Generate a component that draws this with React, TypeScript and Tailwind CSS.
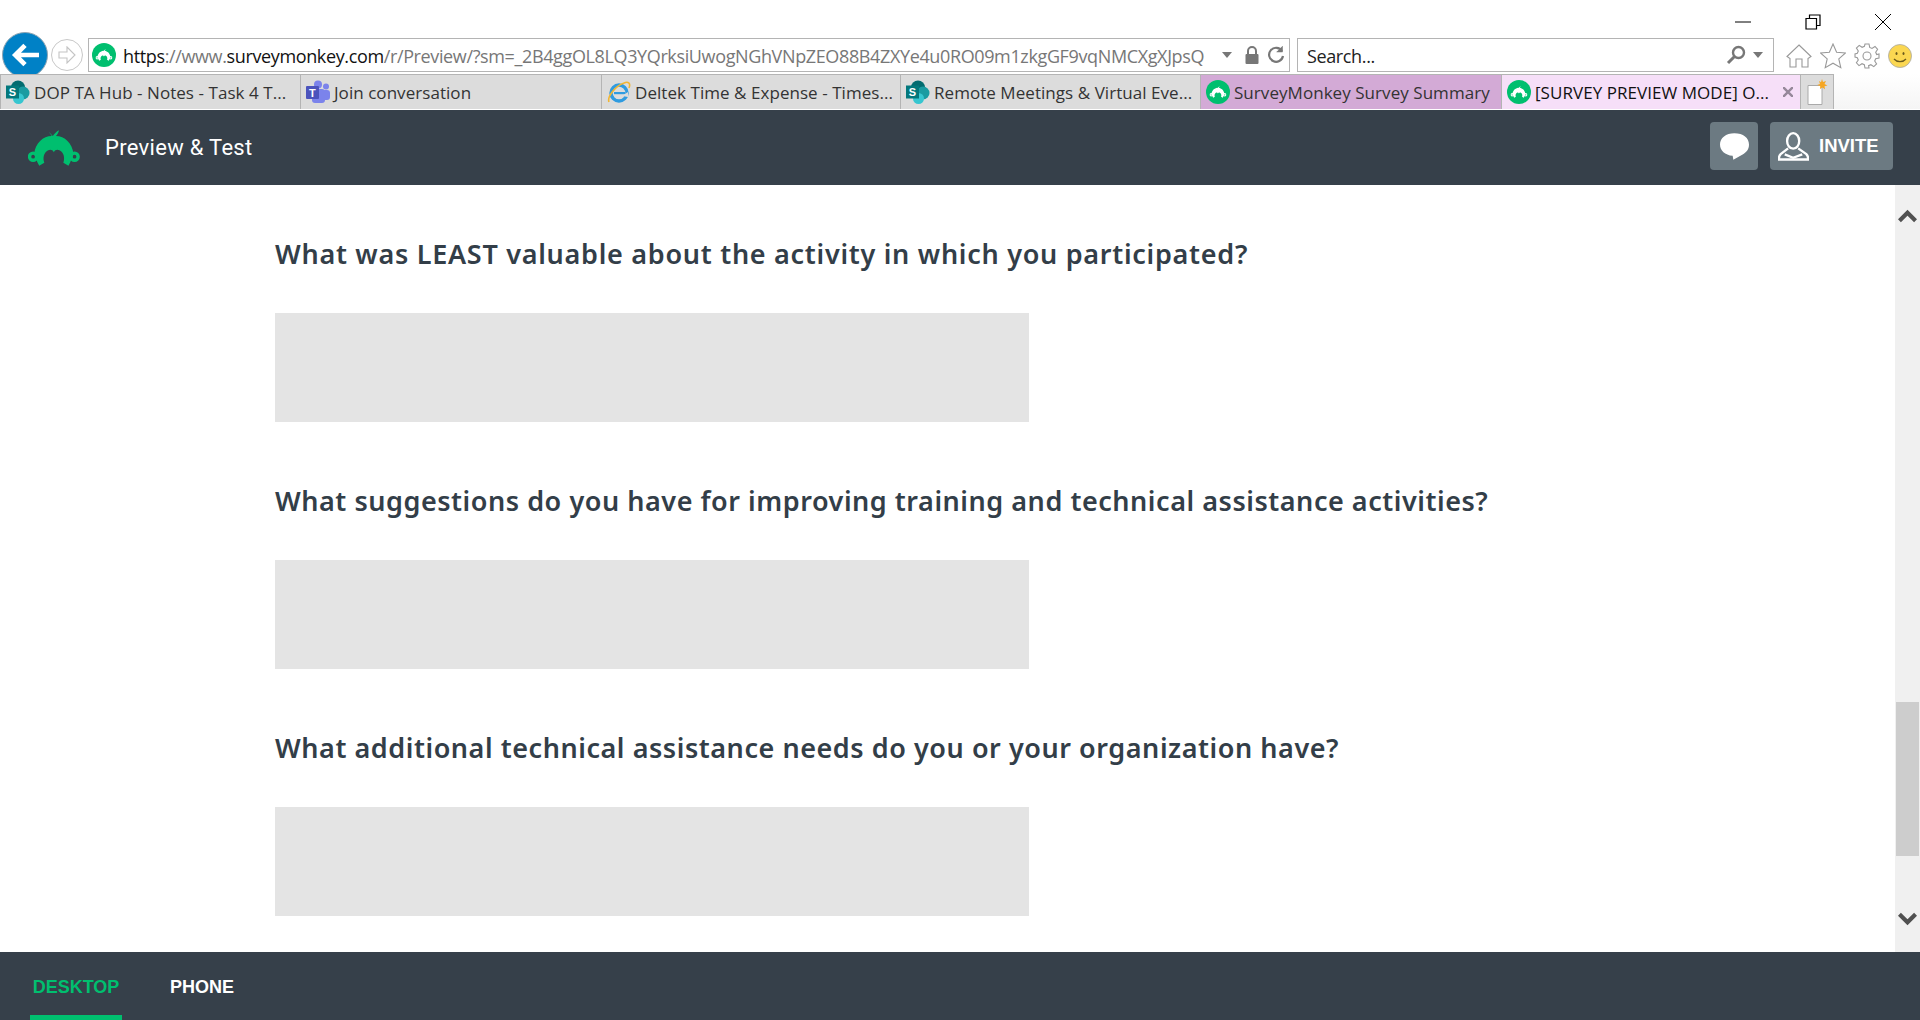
import React from 'react';

const UI = { fontFamily: '"Open Sans", "Noto Sans", sans-serif' };

const MonkeyShape = ({ fill }: { fill: string }) => (
  <g>
    <path fill={fill} d="M61 5 L73 17 C78 10 84 3 91 0 C90 7 86 13 82 17 C108 17 130 38 134 70 L124 95 L119 105 L104 96 C109 84 106 66 94 60 C86 56 80 58 76 65 C72 58 66 56 58 60 C46 66 43 84 48 96 L33 105 L28 95 L18 70 C22 38 44 17 70 17 Z" />
    <circle cx="15" cy="78" r="10.500" fill="none" stroke={fill} strokeWidth="10" />
    <circle cx="137" cy="78" r="10.500" fill="none" stroke={fill} strokeWidth="10" />
  </g>
);

const MonkeyFavicon = ({ className }: { className: string }) => (
  <svg viewBox="0 0 24 24" className={className}>
    <circle cx="12" cy="12" r="12" fill="#00bf6f" />
    <svg x="3.500" y="6" width="17" height="12" viewBox="0 0 153 105">
      <MonkeyShape fill="#fff" />
    </svg>
  </svg>
);

const SharePointIcon = () => (
  <svg viewBox="0 0 24 24" className="w-6 h-6 shrink-0">
    <circle cx="12" cy="7.500" r="7" fill="#036c70" />
    <circle cx="17" cy="13" r="6.500" fill="#1a9ba1" />
    <circle cx="12.500" cy="18.500" r="5.500" fill="#37c6d0" />
    <rect x="0" y="5.500" width="13" height="13" fill="#03787c" />
    <text x="6.500" y="16" fontSize="11" fontWeight="700" fill="#fff" textAnchor="middle" fontFamily="Liberation Sans">S</text>
  </svg>
);

const TeamsIcon = () => (
  <svg viewBox="0 0 24 24" className="w-6 h-6 shrink-0">
    <circle cx="20" cy="6.500" r="3" fill="#7b83eb" />
    <rect x="16" y="10" width="8" height="10" rx="3" fill="#7b83eb" />
    <circle cx="12" cy="4.500" r="4" fill="#7b83eb" />
    <rect x="6" y="9" width="13" height="14" rx="3" fill="#7b83eb" />
    <rect x="0" y="6" width="13" height="13" rx="1" fill="#4b53bc" />
    <text x="6.500" y="16.500" fontSize="11" fontWeight="700" fill="#fff" textAnchor="middle" fontFamily="Liberation Sans">T</text>
  </svg>
);

const IEIcon = () => (
  <svg viewBox="0 0 24 24" className="w-6 h-6 shrink-0">
    <circle cx="12" cy="13" r="8" fill="none" stroke="#2f9be0" strokeWidth="3.400" />
    <rect x="7" y="12" width="11" height="2.200" fill="#2f9be0" />
    <path d="M21 12 L15 16 L21 17 Z" fill="#dcdcdc" />
    <path d="M2 22 C0 17 8 6 17 3 C21 1 24 3 22 8" fill="none" stroke="#f2b632" strokeWidth="1.600" />
  </svg>
);

const Tab = ({
  icon,
  label,
  width,
  bg = 'bg-[#dcdcdc]',
  text = 'text-[#333]',
  close = false,
}: {
  icon: React.ReactNode;
  label: string;
  width: string;
  bg?: string;
  text?: string;
  close?: boolean;
}) => (
  <div className={`${width} ${bg} ${text} h-full flex items-center gap-[4px] pl-[5px] border-l border-t border-[#b4b4b4] whitespace-nowrap overflow-hidden text-[17px] tracking-[0.05px]`}>
    {icon}
    <span className="flex-1 pt-[2px]">{label}</span>
    {close && (
      <svg viewBox="0 0 10 10" className="w-[10px] h-[10px] mr-[7px]" stroke="#96889a" strokeWidth="2.400"><path d="M0 0L10 10M10 0L0 10" /></svg>
    )}
  </div>
);

const Question = ({ title, tracking }: { title: string; tracking: string }) => (
  <section className="h-[247px] pt-[50px]">
    <h2 className={`${tracking} h-[36px] leading-[38px] text-[27px] font-semibold text-[#333e48] whitespace-nowrap`} style={{ fontFamily: '"Noto Sans", sans-serif' }}>
      {title}
    </h2>
    <div className="mt-[42px] w-[754px] h-[109px] bg-[#e4e4e4]" />
  </section>
);

export default function App() {
  return (
    <div className="h-[1020px] w-[1920px] overflow-hidden flex flex-col bg-white" style={UI}>
      {/* Window controls */}
      <div className="h-[38px] shrink-0 flex items-center justify-end pt-[5px]">
        <svg viewBox="0 0 16 16" className="w-4 h-4 mr-[54px]"><path d="M0 8h16" stroke="#000" strokeWidth="1" /></svg>
        <svg viewBox="0 0 16 16" className="w-4 h-4 mr-[54px]" fill="none" stroke="#000" strokeWidth="1.200"><path d="M1 4.500h10.500V15H1z M4.500 4V1H15v10.500h-3.200" /></svg>
        <svg viewBox="0 0 16 16" className="w-4 h-4 mr-[29px]" stroke="#000" strokeWidth="1"><path d="M0 0L16 16M16 0L0 16" /></svg>
      </div>

      {/* Address row */}
      <div className="h-[36px] shrink-0 flex items-start">
        <div className="relative ml-[2px] -mt-[6px] w-[46px] h-[46px] rounded-full bg-[#0081c6] border border-[#8fa5b3] shrink-0 flex items-center justify-center">
          <svg viewBox="0 0 26 24" className="w-[28px] h-[26px]" fill="none" stroke="#fff" strokeWidth="4.400"><path d="M13 3L4 12l9 9M5 12h21" /></svg>
        </div>
        <div className="ml-[3px] mt-[1px] w-[32px] h-[32px] rounded-full border border-[#c8c8c8] shrink-0 flex items-center justify-center">
          <svg viewBox="0 0 20 18" className="w-[20px] h-[18px]" fill="none" stroke="#c4c4c4" strokeWidth="1.100"><path d="M10 1l8 8-8 8v-5H2V6h8z" /></svg>
        </div>
        <div className="ml-[5px] w-[1202px] h-[34px] border border-[#b4b4b4] flex items-center shrink-0 relative">
          <MonkeyFavicon className="w-[24px] h-[24px] ml-[3px] shrink-0" />
          <span className="ml-[7px] pt-[2px] text-[18px] tracking-[-0.37px] text-[#777] whitespace-nowrap">
            <span className="text-[#111]">https</span>://www.<span className="text-[#111]">surveymonkey.com</span>/r/Preview/?sm=_2B4ggOL8LQ3YQrksiUwogNGhVNpZEO88B4ZXYe4u0RO09m1zkgGF9vqNMCXgXJpsQ
          </span>
          <div className="ml-auto flex items-center">
            <svg viewBox="0 0 10 6" className="w-[10px] h-[6px] mr-[13px]"><path d="M0 0h10L5 6z" fill="#777" /></svg>
            <svg viewBox="0 0 14 18" className="w-[14px] h-[18px] mr-[8px]"><path d="M3 8V5a4 4 0 018 0v3" fill="none" stroke="#777" strokeWidth="2" /><rect x="0.500" y="8" width="13" height="10" rx="1" fill="#777" /></svg>
            <svg viewBox="0 0 18 18" className="w-[18px] h-[18px] mr-[4px]" fill="none" stroke="#777" strokeWidth="2.200"><path d="M15 5A7 7 0 1016 10" /><path d="M15.500 0v6h-6" fill="#777" strokeWidth="0.500" /></svg>
          </div>
        </div>
        <div className="ml-[7px] w-[477px] h-[34px] border border-[#b4b4b4] flex items-center shrink-0">
          <span className="ml-[9px] pt-[2px] text-[18px] tracking-[-0.37px] text-[#222]">Search...</span>
          <div className="ml-auto flex items-center">
            <svg viewBox="0 0 20 20" className="w-[20px] h-[20px] mr-[7px]" fill="none" stroke="#777" strokeWidth="2.400"><circle cx="12.500" cy="7.500" r="5.500" /><path d="M8.500 11.500L2 18" strokeWidth="3" /></svg>
            <svg viewBox="0 0 10 6" className="w-[10px] h-[6px] mr-[10px]"><path d="M0 0h10L5 6z" fill="#777" /></svg>
          </div>
        </div>
        <div className="ml-[12px] mt-[1px] flex items-center h-[34px] gap-[8px]">
          <svg viewBox="0 0 26 24" className="w-[26px] h-[24px]" fill="none" stroke="#999" strokeWidth="1.100"><path d="M13 1L25 12.500 22 14.500V23H16V15H10V23H4V14.500L1 12.500Z" /></svg>
          <svg viewBox="0 0 26 26" className="w-[26px] h-[26px]" fill="none" stroke="#999" strokeWidth="1.100"><path d="M13 1l3.600 8.200 8.900.8-6.700 5.900 2 8.800L13 20.200l-7.800 4.500 2-8.800L.5 10l8.900-.8z" /></svg>
          <svg viewBox="0 0 26 26" className="w-[26px] h-[26px]" fill="none" stroke="#999" strokeWidth="1.100"><circle cx="13" cy="13" r="4" /><path d="M11 1h4l.7 3.400 2.300 1 3-1.900 2.600 2.800-1.900 2.900 1 2.300L25 11v4l-3.300.7-1 2.300 1.900 3-2.800 2.600-2.900-1.900-2.300 1L15 25h-4l-.7-3.300-2.300-1-3 1.900-2.600-2.800L4.300 17l-1-2.300L1 14v-3l2.300-.7 1-2.300-1.900-3L5.200 2.400l2.900 1.900 2.300-1z" /></svg>
          <svg viewBox="0 0 24 24" className="w-[24px] h-[24px]"><circle cx="12" cy="12" r="11.500" fill="#fbd751" stroke="#a8a8a8" strokeWidth="0.800" /><ellipse cx="8.500" cy="9.500" rx="1" ry="1.600" fill="#6b5a1c" /><ellipse cx="15.500" cy="9.500" rx="1" ry="1.600" fill="#6b5a1c" /><path d="M6 15c3 3.500 9 3.500 12 0" fill="none" stroke="#6b5a1c" strokeWidth="1.200" /></svg>
        </div>
      </div>

      {/* Tab strip */}
      <div className="relative h-[35px] shrink-0 flex">
        <Tab width="w-[300px]" icon={<SharePointIcon />} label="DOP TA Hub - Notes - Task 4 T..." />
        <Tab width="w-[301px]" icon={<TeamsIcon />} label="Join conversation" />
        <Tab width="w-[299px]" icon={<IEIcon />} label="Deltek Time & Expense - Times..." />
        <Tab width="w-[300px]" icon={<SharePointIcon />} label="Remote Meetings & Virtual Eve..." />
        <Tab width="w-[301px]" bg="bg-[#d3aad6]" icon={<MonkeyFavicon className="w-6 h-6 shrink-0" />} label="SurveyMonkey Survey Summary" />
        <Tab width="w-[299px]" bg="bg-[#f6dff8]" text="text-[#111]" close icon={<MonkeyFavicon className="w-6 h-6 shrink-0" />} label="[SURVEY PREVIEW MODE] O..." />
        <div className="w-[34px] h-full bg-[#dcdcdc] border border-b-0 border-[#b4b4b4] flex items-center justify-center">
          <svg viewBox="0 0 22 26" className="w-[22px] h-[26px]">
            <path d="M2 6.500h14v19H2z" fill="#fff" stroke="#aaa" />
            <path d="M16 0l1 3 3-1-1.500 3 3 1.500-3 .8.500 3-2.700-1.800L14 10l.2-3-3-1 2.800-1-1-3 2 1.300z" fill="#f5a623" />
          </svg>
        </div>
        <div className="flex-1 bg-gradient-to-b from-white to-[#f5f5f5]" />
      </div>

      {/* App header */}
      <header className="mt-px h-[75px] shrink-0 bg-[#36404a] flex items-center pl-[28px] pr-[27px]">
        <svg viewBox="0 0 153 105" className="w-[52px] h-[36px] shrink-0"><MonkeyShape fill="#00bf6f" /></svg>
        <h1 className="ml-[25px] text-[22px] text-white tracking-[0.3px]" style={{ fontFamily: 'Roboto, sans-serif' }}>Preview &amp; Test</h1>
        <div className="ml-auto self-start mt-[12px] flex items-center gap-[12px]">
          <button className="w-[48px] h-[48px] rounded-[4px] bg-[#6c7a82] flex items-center justify-center">
            <svg viewBox="0 0 87 80" className="w-[29px] h-[27px]"><path d="M43 0C70 0 87 14 87 34C87 50 78 58 68 64L40 80L38 68C15 66 0 52 0 34C0 14 18 0 43 0Z" fill="#fff" /></svg>
          </button>
          <button className="w-[123px] h-[48px] rounded-[4px] bg-[#6c7a82] flex items-center pl-[8px]">
            <svg viewBox="0 0 92 85" className="w-[31px] h-[29px]" fill="none" stroke="#fff" strokeWidth="7"><ellipse cx="45" cy="26" rx="18" ry="23" /><path d="M30 48L8 65Q3 70 3 76V81H89V76Q89 70 84 65L60 48" /><path d="M20 66L45 76L72 66" /></svg>
            <span className="ml-[10px] text-[18.5px] font-bold text-white" style={{ fontFamily: '"Liberation Sans", sans-serif' }}>INVITE</span>
          </button>
        </div>
      </header>

      {/* Survey content */}
      <div className="flex-1 min-h-0 flex">
        <main className="flex-1 pl-[275px]">
          <Question tracking="tracking-[0.72px]" title="What was LEAST valuable about the activity in which you participated?" />
          <Question tracking="tracking-[0.54px]" title="What suggestions do you have for improving training and technical assistance activities?" />
          <Question tracking="tracking-[0.55px]" title="What additional technical assistance needs do you or your organization have?" />
        </main>
        <div className="relative w-[25px] shrink-0 bg-[#f0f0f0]">
          <svg viewBox="0 0 20 14" className="absolute left-[3px] top-[24px] w-[19px] h-[14px]" fill="none" stroke="#505050" strokeWidth="4.400"><path d="M1.500 12L10 3.500 18.500 12" /></svg>
          <div className="absolute left-[1px] right-[1px] top-[517px] h-[154px] bg-[#cdcdcd]" />
          <svg viewBox="0 0 20 14" className="absolute left-[3px] bottom-[26px] w-[19px] h-[14px]" fill="none" stroke="#505050" strokeWidth="4.400"><path d="M1.500 2L10 10.500 18.500 2" /></svg>
        </div>
      </div>

      {/* Footer tabs */}
      <footer className="h-[68px] shrink-0 bg-[#36404a] flex pl-[30px] text-[18px] font-bold" style={{ fontFamily: '"Liberation Sans", sans-serif' }}>
        <div className="w-[92px] h-full flex justify-center pt-[22px] text-[#00bf6f] border-b-[5px] border-[#00bf6f]">DESKTOP</div>
        <div className="ml-[48px] pt-[22px] text-white">PHONE</div>
      </footer>
    </div>
  );
}
